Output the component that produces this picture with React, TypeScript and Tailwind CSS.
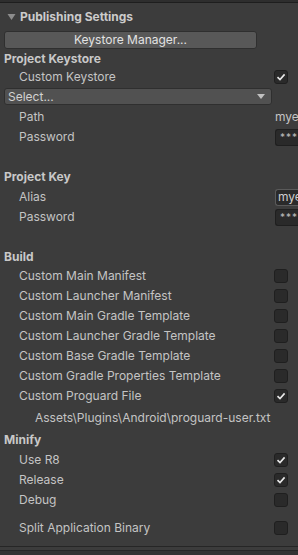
import React from 'react';

const font = { fontFamily: 'Inter, "Noto Sans", sans-serif' };

const Check = ({ on }: { on?: boolean }) => (
  <div className="w-[14px] h-[14px] rounded-[3px] bg-[#2a2a2a] border border-[#1f1f1f] flex items-center justify-center">
    {on && (
      <svg width="10" height="10" viewBox="0 0 10 10">
        <path d="M1.5 5.2 L4 7.6 L8.6 2.4" stroke="#e8e8e8" strokeWidth="1.6" fill="none" />
      </svg>
    )}
  </div>
);

const Heading = ({ text, h = 'h-5' }: { text: string; h?: string }) => (
  <div className={`${h} flex items-center pl-[4px] font-bold text-[12px] text-[#c8c8c8]`}>{text}</div>
);

const ToggleRow = ({ label, on, h = 'h-5' }: { label: string; on?: boolean; h?: string }) => (
  <div className={`${h} flex items-center justify-between pl-[19px] pr-[10px]`}>
    <span className="text-[12px] text-[#c4c4c4]">{label}</span>
    <Check on={on} />
  </div>
);

const FieldRow = ({ label, children }: { label: string; children: React.ReactNode }) => (
  <div className="h-5 flex items-center pl-[19px] overflow-hidden">
    <span className="text-[12px] text-[#c4c4c4] w-[256px] shrink-0">{label}</span>
    {children}
  </div>
);

const Secret = () => (
  <div className="h-[17px] w-[30px] shrink-0 rounded-l-[3px] bg-[#2a2a2a] border border-r-0 border-[#1f1f1f] flex items-center pl-[4px] text-[10px] tracking-[1px] text-[#bdbdbd] overflow-hidden">
    ****
  </div>
);

export default function App() {
  return (
    <div style={font} className="w-[298px] h-[555px] bg-[#3c3c3c] overflow-hidden flex flex-col">
      <div className="h-[3px] bg-[#2e2e2e] border-b border-[#1e1e1e]" />

      {/* Foldout header */}
      <div className="h-[27px] flex items-center pl-[7px] gap-[4px]">
        <svg width="9" height="8" viewBox="0 0 9 8">
          <path d="M0.5 1 L8.5 1 L4.5 7 Z" fill="#8c8c8c" />
        </svg>
        <span className="text-[12px] font-bold text-[#cbcbcb]">Publishing Settings</span>
      </div>

      <div className="pl-[4px] pr-[41px] mt-[1px]">
        <div className="h-[18px] rounded-[3px] bg-[#585858] border border-[#2f2f2f] flex items-center justify-center text-[12px] text-[#e2e2e2]">
          Keystore Manager...
        </div>
      </div>

      <Heading text="Project Keystore" h="h-[19px]" />
      <ToggleRow label="Custom Keystore" on h="h-[18px]" />

      <div className="pl-[4px] pr-[26px] mt-[2px]">
        <div className="h-[17px] rounded-[3px] bg-[#515151] border border-[#2f2f2f] flex items-center justify-between pl-[3px] pr-[6px] text-[12px] text-[#d2d2d2]">
          <span>Select...</span>
          <svg width="8" height="5" viewBox="0 0 8 5">
            <path d="M0 0 L8 0 L4 5 Z" fill="#c0c0c0" />
          </svg>
        </div>
      </div>

      <div className="mt-[2px]" />
      <FieldRow label="Path">
        <span className="text-[12px] text-[#c4c4c4] w-[23px] shrink-0 overflow-hidden whitespace-nowrap">mye</span>
      </FieldRow>
      <FieldRow label="Password">
        <Secret />
      </FieldRow>

      <div className="h-5" />
      <Heading text="Project Key" />
      <FieldRow label="Alias">
        <div className="h-[17px] w-[30px] shrink-0 rounded-l-[3px] bg-[#2a2a2a] border border-r-0 border-[#5a5a5a] flex items-center pl-[2px] text-[12px] text-[#cfcfcf] overflow-hidden whitespace-nowrap">
          mye
        </div>
      </FieldRow>
      <FieldRow label="Password">
        <Secret />
      </FieldRow>

      <div className="h-5" />
      <Heading text="Build" h="h-[19px]" />
      <ToggleRow label="Custom Main Manifest" />
      <ToggleRow label="Custom Launcher Manifest" />
      <ToggleRow label="Custom Main Gradle Template" />
      <ToggleRow label="Custom Launcher Gradle Template" />
      <ToggleRow label="Custom Base Gradle Template" />
      <ToggleRow label="Custom Gradle Properties Template" />
      <ToggleRow label="Custom Proguard File" on />
      <div className="h-[24px] flex items-center pl-[35px] text-[12px] text-[#c4c4c4]">
        Assets\Plugins\Android\proguard-user.txt
      </div>

      <Heading text="Minify" />
      <ToggleRow label="Use R8" on />
      <ToggleRow label="Release" on />
      <ToggleRow label="Debug" />
      <div className="h-2" />
      <ToggleRow label="Split Application Binary" />

      <div className="h-2" />
      <div className="h-[4px] border-t border-[#262626]" />
      <div className="flex-1 bg-[#333333] border-t border-[#262626]" />
    </div>
  );
}
